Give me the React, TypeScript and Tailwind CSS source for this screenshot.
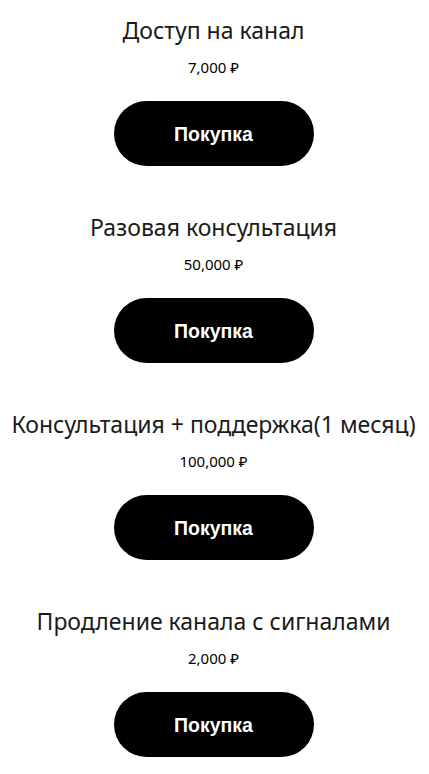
import React from 'react';

const items = [
  { title: 'Доступ на канал', price: '7,000 ₽' },
  { title: 'Разовая консультация', price: '50,000 ₽' },
  { title: 'Консультация + поддержка(1 месяц)', price: '100,000 ₽' },
  { title: 'Продление канала с сигналами', price: '2,000 ₽' },
];

export default function App() {
  return (
    <div className="min-h-screen bg-white flex flex-col items-center font-['Noto_Sans',sans-serif] text-black">
      {items.map((item) => (
        <div key={item.title} className="h-[197px] w-full flex flex-col items-center pt-[14px] pr-[2px]">
          <div className="h-[32px] leading-[32px] text-[23px] whitespace-nowrap text-[#1a1a1a]">{item.title}</div>
          <div className="mt-[11px] h-[20px] leading-[20px] text-[15px]">{item.price}</div>
          <button className="mt-[24px] w-[200px] h-[65px] rounded-full bg-black text-white text-[19.5px] font-bold font-['Liberation_Sans',sans-serif] pt-[3px]">
            Покупка
          </button>
        </div>
      ))}
    </div>
  );
}
